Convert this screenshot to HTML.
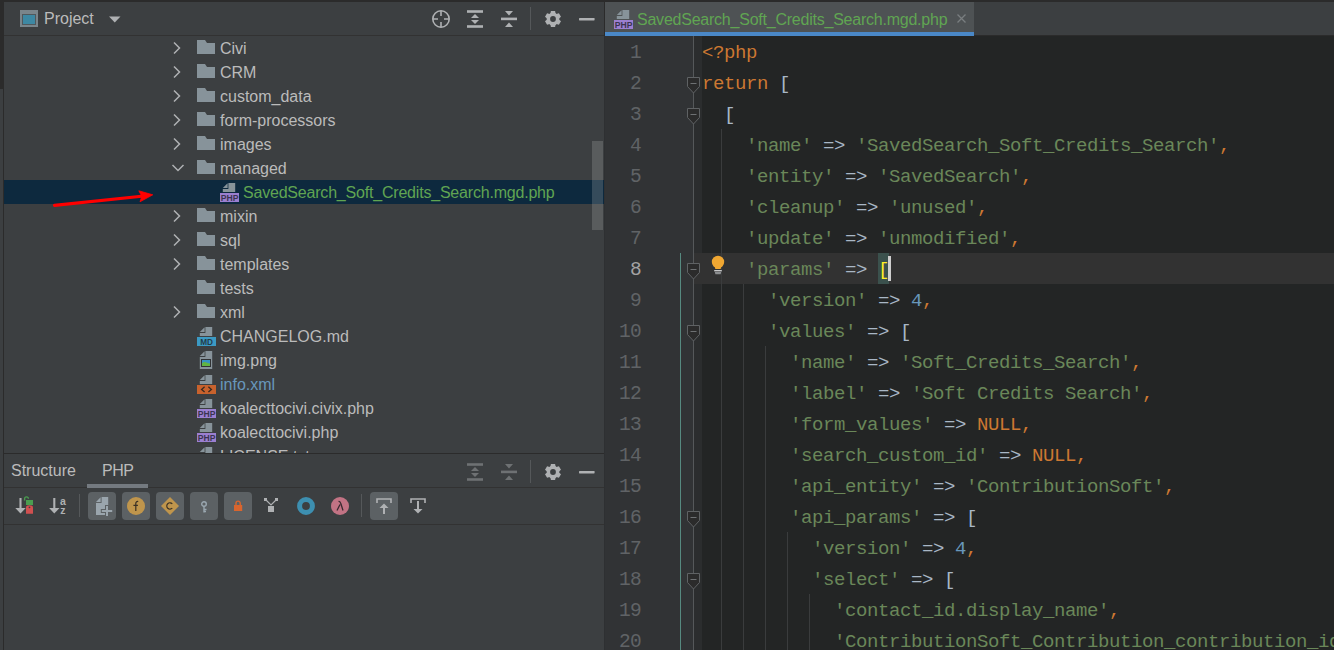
<!DOCTYPE html>
<html><head><meta charset="utf-8"><style>
*{margin:0;padding:0;box-sizing:border-box}
html,body{width:1334px;height:650px;overflow:hidden;background:#3c3f41}
body{position:relative;font-family:"Liberation Sans",sans-serif;}
.a{position:absolute}
.t{position:absolute;font-size:16px;color:#bbbbbb;white-space:pre;line-height:24px;height:24px}
.code{position:absolute;font-family:"Liberation Mono",monospace;font-size:19px;letter-spacing:-0.4px;white-space:pre;line-height:31px;height:31px;color:#a9b7c6}
.k{color:#cc7832}.s{color:#6a8759}.n{color:#6897bb}
.ln{position:absolute;font-family:"Liberation Mono",monospace;font-size:19.5px;letter-spacing:-0.7px;line-height:31px;height:31px;color:#606366;text-align:right;width:60px;left:581px}
svg{position:absolute;overflow:visible}
</style></head>
<body>
<div class="a" style="left:0;top:0;width:1334px;height:2px;background:#2b2b2b"></div>
<div class="a" style="left:0;top:2px;width:3px;height:87px;background:#2b2b2b"></div>
<div class="a" style="left:3px;top:2px;width:1px;height:648px;background:#2b2b2b"></div>
<div class="a" style="left:4px;top:35px;width:600px;height:1px;background:#323232"></div>
<div class="a" style="left:20px;top:10px;width:18px;height:17px;background:#7a858b"></div>
<div class="a" style="left:22px;top:14px;width:14px;height:11px;background:#50585c"></div>
<div class="a" style="left:23px;top:15px;width:12px;height:9px;background:#3d88a3"></div>
<div class="t" style="left:44px;top:7px">Project</div>
<svg style="left:109px;top:16px" width="12" height="8"><path d="M0 0.5H11.5L5.75 6.5Z" fill="#afb1b3"/></svg>
<svg style="left:432px;top:10px" width="18" height="18"><circle cx="9" cy="9" r="8.2" fill="none" stroke="#afb1b3" stroke-width="1.6"/><path d="M9 1V6M9 12V17M1 9H6M12 9H17" stroke="#afb1b3" stroke-width="1.6"/></svg><svg style="left:467px;top:10px" width="16" height="18"><rect x="0" y="0.2" width="16" height="2.6" fill="#afb1b3"/><rect x="0" y="15.2" width="16" height="2.6" fill="#afb1b3"/><path d="M4 8H12L8 4Z M4 10H12L8 14Z" fill="#afb1b3"/></svg><svg style="left:501px;top:10px" width="16" height="18"><rect x="0" y="7.6" width="16" height="2.6" fill="#afb1b3"/><path d="M4 1H12L8 5.5Z M4 17H12L8 12.5Z" fill="#afb1b3"/></svg><div class="a" style="left:530px;top:7px;width:1px;height:23px;background:#55585a"></div><svg style="left:545px;top:11px" width="16" height="16" viewBox="-8 -8 16 16"><path d="M-2.61 -5.40 L-2.08 -8.04 L2.08 -8.04 L2.61 -5.40 L3.37 -4.96 L5.92 -5.82 L8.00 -2.22 L5.98 -0.44 L5.98 0.44 L8.00 2.22 L5.92 5.82 L3.37 4.96 L2.61 5.40 L2.08 8.04 L-2.08 8.04 L-2.61 5.40 L-3.37 4.96 L-5.92 5.82 L-8.00 2.22 L-5.98 0.44 L-5.98 -0.44 L-8.00 -2.22 L-5.92 -5.82 L-3.37 -4.96Z" fill="#afb1b3"/><circle r="6.3" fill="#afb1b3"/><circle r="2.9" fill="#3c3f41"/></svg><svg style="left:579px;top:17px" width="16" height="4"><rect x="0" y="0.9" width="15.6" height="2.5" rx="0.6" fill="#afb1b3"/></svg>
<div class="a" style="left:4px;top:180px;width:600px;height:24px;background:#0d293e"></div>
<div class="a" style="left:4px;top:36px;width:600px;height:417px;overflow:hidden"><div class="a" style="left:-4px;top:-36px;width:1334px;height:650px"><svg style="left:173px;top:42px" width="8" height="12"><path d="M1 0.5L6.5 6L1 11.5" fill="none" stroke="#afb1b3" stroke-width="1.5"/></svg><svg style="left:197px;top:40px" width="18" height="14"><path d="M0 0H8L10 3H18V14H0Z" fill="#87939a"/></svg><div class="t" style="left:220px;top:37px">Civi</div><svg style="left:173px;top:66px" width="8" height="12"><path d="M1 0.5L6.5 6L1 11.5" fill="none" stroke="#afb1b3" stroke-width="1.5"/></svg><svg style="left:197px;top:64px" width="18" height="14"><path d="M0 0H8L10 3H18V14H0Z" fill="#87939a"/></svg><div class="t" style="left:220px;top:61px">CRM</div><svg style="left:173px;top:90px" width="8" height="12"><path d="M1 0.5L6.5 6L1 11.5" fill="none" stroke="#afb1b3" stroke-width="1.5"/></svg><svg style="left:197px;top:88px" width="18" height="14"><path d="M0 0H8L10 3H18V14H0Z" fill="#87939a"/></svg><div class="t" style="left:220px;top:85px">custom_data</div><svg style="left:173px;top:114px" width="8" height="12"><path d="M1 0.5L6.5 6L1 11.5" fill="none" stroke="#afb1b3" stroke-width="1.5"/></svg><svg style="left:197px;top:112px" width="18" height="14"><path d="M0 0H8L10 3H18V14H0Z" fill="#87939a"/></svg><div class="t" style="left:220px;top:109px">form-processors</div><svg style="left:173px;top:138px" width="8" height="12"><path d="M1 0.5L6.5 6L1 11.5" fill="none" stroke="#afb1b3" stroke-width="1.5"/></svg><svg style="left:197px;top:136px" width="18" height="14"><path d="M0 0H8L10 3H18V14H0Z" fill="#87939a"/></svg><div class="t" style="left:220px;top:133px">images</div><svg style="left:172px;top:164px" width="12" height="8"><path d="M0.5 1L6 6.5L11.5 1" fill="none" stroke="#afb1b3" stroke-width="1.5"/></svg><svg style="left:197px;top:160px" width="18" height="14"><path d="M0 0H8L10 3H18V14H0Z" fill="#87939a"/></svg><div class="t" style="left:220px;top:157px">managed</div><svg style="left:220px;top:183px" width="19" height="19"><path d="M8.4 0H15.2V9H2.8V6H8.4Z" fill="#87939a"/><path d="M2.8 5L7.6 0.2V5Z" fill="#87939a"/><rect x="0" y="10" width="19" height="9" fill="#9b7fd0"/><text x="9.6" y="17.6" text-anchor="middle" font-family="Liberation Sans" font-weight="bold" font-size="8.6" fill="#3a3450">PHP</text></svg><div class="t" style="left:243px;top:181px;color:#60a552;letter-spacing:-0.2px">SavedSearch_Soft_Credits_Search.mgd.php</div><svg style="left:173px;top:210px" width="8" height="12"><path d="M1 0.5L6.5 6L1 11.5" fill="none" stroke="#afb1b3" stroke-width="1.5"/></svg><svg style="left:197px;top:208px" width="18" height="14"><path d="M0 0H8L10 3H18V14H0Z" fill="#87939a"/></svg><div class="t" style="left:220px;top:205px">mixin</div><svg style="left:173px;top:234px" width="8" height="12"><path d="M1 0.5L6.5 6L1 11.5" fill="none" stroke="#afb1b3" stroke-width="1.5"/></svg><svg style="left:197px;top:232px" width="18" height="14"><path d="M0 0H8L10 3H18V14H0Z" fill="#87939a"/></svg><div class="t" style="left:220px;top:229px">sql</div><svg style="left:173px;top:258px" width="8" height="12"><path d="M1 0.5L6.5 6L1 11.5" fill="none" stroke="#afb1b3" stroke-width="1.5"/></svg><svg style="left:197px;top:256px" width="18" height="14"><path d="M0 0H8L10 3H18V14H0Z" fill="#87939a"/></svg><div class="t" style="left:220px;top:253px">templates</div><svg style="left:197px;top:280px" width="18" height="14"><path d="M0 0H8L10 3H18V14H0Z" fill="#87939a"/></svg><div class="t" style="left:220px;top:277px">tests</div><svg style="left:173px;top:306px" width="8" height="12"><path d="M1 0.5L6.5 6L1 11.5" fill="none" stroke="#afb1b3" stroke-width="1.5"/></svg><svg style="left:197px;top:304px" width="18" height="14"><path d="M0 0H8L10 3H18V14H0Z" fill="#87939a"/></svg><div class="t" style="left:220px;top:301px">xml</div><svg style="left:197px;top:327px" width="19" height="19"><path d="M8.4 0H15.2V9H2.8V6H8.4Z" fill="#87939a"/><path d="M2.8 5L7.6 0.2V5Z" fill="#87939a"/><rect x="0" y="10" width="19" height="9" fill="#3b9ac4"/><text x="9.6" y="17.6" text-anchor="middle" font-family="Liberation Sans" font-weight="bold" font-size="8.2" fill="#233c4a">MD</text></svg><div class="t" style="left:220px;top:325px;color:#bbbbbb">CHANGELOG.md</div><svg style="left:197px;top:351px" width="19" height="19"><path d="M8.4 0H15.2V18H2.8V6H8.4Z" fill="#87939a"/><path d="M2.8 5L7.6 0.2V5Z" fill="#87939a"/><rect x="4" y="8" width="10" height="8" fill="#313335"/><rect x="5" y="9" width="8" height="6" fill="#3592c4"/><path d="M5 15V12.2Q7.5 9.8 10 11.8Q11.5 12.5 13 12.6V15Z" fill="#62b543"/></svg><div class="t" style="left:220px;top:349px;color:#bbbbbb">img.png</div><svg style="left:197px;top:375px" width="19" height="19"><path d="M8.4 0H15.2V9H2.8V6H8.4Z" fill="#87939a"/><path d="M2.8 5L7.6 0.2V5Z" fill="#87939a"/><rect x="0" y="10" width="19" height="9" fill="#c8622d"/><path d="M7.6 11.8L4.6 14.4L7.6 17M11.4 11.8L14.4 14.4L11.4 17" fill="none" stroke="#3a2a20" stroke-width="1.3"/></svg><div class="t" style="left:220px;top:373px;color:#6897bb">info.xml</div><svg style="left:197px;top:399px" width="19" height="19"><path d="M8.4 0H15.2V9H2.8V6H8.4Z" fill="#87939a"/><path d="M2.8 5L7.6 0.2V5Z" fill="#87939a"/><rect x="0" y="10" width="19" height="9" fill="#9b7fd0"/><text x="9.6" y="17.6" text-anchor="middle" font-family="Liberation Sans" font-weight="bold" font-size="8.6" fill="#3a3450">PHP</text></svg><div class="t" style="left:220px;top:397px;color:#bbbbbb">koalecttocivi.civix.php</div><svg style="left:197px;top:423px" width="19" height="19"><path d="M8.4 0H15.2V9H2.8V6H8.4Z" fill="#87939a"/><path d="M2.8 5L7.6 0.2V5Z" fill="#87939a"/><rect x="0" y="10" width="19" height="9" fill="#9b7fd0"/><text x="9.6" y="17.6" text-anchor="middle" font-family="Liberation Sans" font-weight="bold" font-size="8.6" fill="#3a3450">PHP</text></svg><div class="t" style="left:220px;top:421px;color:#bbbbbb">koalecttocivi.php</div><svg style="left:197px;top:447px" width="19" height="19"><path d="M8.4 0H15.2V9H2.8V6H8.4Z" fill="#87939a"/><path d="M2.8 5L7.6 0.2V5Z" fill="#87939a"/><rect x="0" y="10" width="19" height="9" fill="#87939a"/></svg><div class="t" style="left:220px;top:445px;color:#bbbbbb">LICENSE.txt</div></div></div>
<svg style="left:0;top:0" width="200" height="220"><path d="M54.5 205.3L144 196" stroke="#ff0000" stroke-width="3.2" stroke-linecap="round"/><path d="M152.8 194.8L138.8 190.8L141.8 196.3L140 201.8Z" fill="#ff0000" stroke="#ff0000" stroke-width="0.8" stroke-linejoin="round"/></svg>
<div class="a" style="left:592px;top:141px;width:11px;height:89px;background:rgba(188,188,188,0.234)"></div>
<div class="a" style="left:4px;top:453px;width:600px;height:1px;background:#2b2b2b"></div>
<div class="t" style="left:11px;top:459px">Structure</div>
<div class="t" style="left:102px;top:459px;letter-spacing:-0.5px">PHP</div>
<div class="a" style="left:4px;top:487px;width:600px;height:1px;background:#323232"></div>
<div class="a" style="left:87px;top:484px;width:61px;height:4px;background:#747a80"></div>
<svg style="left:467px;top:463px" width="16" height="18"><rect x="0" y="0.2" width="16" height="2.6" fill="#6e7173"/><rect x="0" y="15.2" width="16" height="2.6" fill="#6e7173"/><path d="M4 8H12L8 4Z M4 10H12L8 14Z" fill="#6e7173"/></svg><svg style="left:501px;top:463px" width="16" height="18"><rect x="0" y="7.6" width="16" height="2.6" fill="#6e7173"/><path d="M4 1H12L8 5.5Z M4 17H12L8 12.5Z" fill="#6e7173"/></svg><div class="a" style="left:530px;top:460px;width:1px;height:23px;background:#55585a"></div><svg style="left:545px;top:464px" width="16" height="16" viewBox="-8 -8 16 16"><path d="M-2.61 -5.40 L-2.08 -8.04 L2.08 -8.04 L2.61 -5.40 L3.37 -4.96 L5.92 -5.82 L8.00 -2.22 L5.98 -0.44 L5.98 0.44 L8.00 2.22 L5.92 5.82 L3.37 4.96 L2.61 5.40 L2.08 8.04 L-2.08 8.04 L-2.61 5.40 L-3.37 4.96 L-5.92 5.82 L-8.00 2.22 L-5.98 0.44 L-5.98 -0.44 L-8.00 -2.22 L-5.92 -5.82 L-3.37 -4.96Z" fill="#afb1b3"/><circle r="6.3" fill="#afb1b3"/><circle r="2.9" fill="#3c3f41"/></svg><svg style="left:579px;top:470px" width="16" height="4"><rect x="0" y="0.9" width="15.6" height="2.5" rx="0.6" fill="#afb1b3"/></svg>
<div class="a" style="left:4px;top:524px;width:600px;height:1px;background:#323232"></div>
<div class="a" style="left:604px;top:2px;width:1px;height:34px;background:#2b2b2b"></div>
<div class="a" style="left:604px;top:36px;width:1px;height:614px;background:#2e3032"></div>
<div class="a" style="left:605px;top:35px;width:729px;height:1px;background:#2b2b2b"></div>
<div class="a" style="left:605px;top:2px;width:369px;height:30px;background:#4e5254"></div>
<div class="a" style="left:605px;top:32px;width:369px;height:4px;background:#4a88c7"></div>
<svg style="left:614px;top:10px" width="19" height="19"><path d="M8.4 0H15.2V9H2.8V6H8.4Z" fill="#87939a"/><path d="M2.8 5L7.6 0.2V5Z" fill="#87939a"/><rect x="0" y="10" width="19" height="9" fill="#9b7fd0"/><text x="9.6" y="17.6" text-anchor="middle" font-family="Liberation Sans" font-weight="bold" font-size="8.6" fill="#3a3450">PHP</text></svg>
<div class="t" style="left:637px;top:8px;color:#60a552;letter-spacing:-0.23px">SavedSearch_Soft_Credits_Search.mgd.php</div>
<svg style="left:957px;top:14px" width="9" height="9"><path d="M0.5 0.5L8.5 8.5M8.5 0.5L0.5 8.5" stroke="#7a7e80" stroke-width="1.3"/></svg>
<div class="a" style="left:605px;top:36px;width:97px;height:614px;background:#313335"></div>
<div class="a" style="left:702px;top:36px;width:632px;height:614px;background:#232525"></div>
<div class="a" style="left:694px;top:36px;width:8px;height:614px;background:#2b2d2e"></div>
<div class="a" style="left:694px;top:253px;width:640px;height:31px;background:#323232"></div>
<div class="a" style="left:680px;top:253px;width:1px;height:397px;background:#568a80"></div>
<div class="a" style="left:693px;top:36px;width:1px;height:614px;background:#55585a"></div>
<div class="a" style="left:721px;top:129px;width:1px;height:521px;background:#3a3c3d"></div>
<div class="a" style="left:743px;top:284px;width:1px;height:366px;background:#3a3c3d"></div>
<div class="a" style="left:765px;top:346px;width:1px;height:304px;background:#3a3c3d"></div>
<div class="a" style="left:787px;top:532px;width:1px;height:118px;background:#3a3c3d"></div>
<div class="a" style="left:809px;top:594px;width:1px;height:56px;background:#3a3c3d"></div>
<svg style="left:687px;top:77px" width="14" height="17"><path d="M0.5 0.5H12.5V9.5L6.5 16L0.5 9.5Z" fill="#2b2b2b" stroke="#5f6264" stroke-width="1"/><path d="M3.5 6.5H9.5" stroke="#6e7173" stroke-width="1"/></svg>
<svg style="left:687px;top:108px" width="14" height="17"><path d="M0.5 0.5H12.5V9.5L6.5 16L0.5 9.5Z" fill="#2b2b2b" stroke="#5f6264" stroke-width="1"/><path d="M3.5 6.5H9.5" stroke="#6e7173" stroke-width="1"/></svg>
<svg style="left:687px;top:263px" width="14" height="17"><path d="M0.5 0.5H12.5V9.5L6.5 16L0.5 9.5Z" fill="#2b2b2b" stroke="#5f6264" stroke-width="1"/><path d="M3.5 6.5H9.5" stroke="#6e7173" stroke-width="1"/></svg>
<svg style="left:687px;top:325px" width="14" height="17"><path d="M0.5 0.5H12.5V9.5L6.5 16L0.5 9.5Z" fill="#2b2b2b" stroke="#5f6264" stroke-width="1"/><path d="M3.5 6.5H9.5" stroke="#6e7173" stroke-width="1"/></svg>
<svg style="left:687px;top:511px" width="14" height="17"><path d="M0.5 0.5H12.5V9.5L6.5 16L0.5 9.5Z" fill="#2b2b2b" stroke="#5f6264" stroke-width="1"/><path d="M3.5 6.5H9.5" stroke="#6e7173" stroke-width="1"/></svg>
<svg style="left:687px;top:573px" width="14" height="17"><path d="M0.5 0.5H12.5V9.5L6.5 16L0.5 9.5Z" fill="#2b2b2b" stroke="#5f6264" stroke-width="1"/><path d="M3.5 6.5H9.5" stroke="#6e7173" stroke-width="1"/></svg>
<svg style="left:711px;top:255px" width="14" height="20"><circle cx="7" cy="7" r="6.2" fill="#f0a732"/><path d="M3 10.5Q4.2 12 4.3 14H9.7Q9.8 12 11 10.5Z" fill="#f0a732"/><rect x="3.2" y="15" width="7.6" height="1.4" fill="#c8c9ca"/><path d="M3.8 17H10.2L9.6 19.2H4.4Z" fill="#8c8e90"/></svg>
<div class="code" style="left:702px;top:38px"><span class="k">&lt;?php</span></div>
<div class="ln" style="top:38px;color:#606366">1</div>
<div class="code" style="left:702px;top:69px"><span class="k">return</span> [</div>
<div class="ln" style="top:69px;color:#606366">2</div>
<div class="code" style="left:702px;top:100px">  [</div>
<div class="ln" style="top:100px;color:#606366">3</div>
<div class="code" style="left:702px;top:131px">    <span class="s">&#x27;name&#x27;</span> =&gt; <span class="s">&#x27;SavedSearch_Soft_Credits_Search&#x27;</span><span class="k">,</span></div>
<div class="ln" style="top:131px;color:#606366">4</div>
<div class="code" style="left:702px;top:162px">    <span class="s">&#x27;entity&#x27;</span> =&gt; <span class="s">&#x27;SavedSearch&#x27;</span><span class="k">,</span></div>
<div class="ln" style="top:162px;color:#606366">5</div>
<div class="code" style="left:702px;top:193px">    <span class="s">&#x27;cleanup&#x27;</span> =&gt; <span class="s">&#x27;unused&#x27;</span><span class="k">,</span></div>
<div class="ln" style="top:193px;color:#606366">6</div>
<div class="code" style="left:702px;top:224px">    <span class="s">&#x27;update&#x27;</span> =&gt; <span class="s">&#x27;unmodified&#x27;</span><span class="k">,</span></div>
<div class="ln" style="top:224px;color:#606366">7</div>
<div class="code" style="left:702px;top:255px">    <span class="s">&#x27;params&#x27;</span> =&gt; </div>
<div class="ln" style="top:255px;color:#a4a3a3">8</div>
<div class="code" style="left:702px;top:286px">      <span class="s">&#x27;version&#x27;</span> =&gt; <span class="n">4</span><span class="k">,</span></div>
<div class="ln" style="top:286px;color:#606366">9</div>
<div class="code" style="left:702px;top:317px">      <span class="s">&#x27;values&#x27;</span> =&gt; [</div>
<div class="ln" style="top:317px;color:#606366">10</div>
<div class="code" style="left:702px;top:348px">        <span class="s">&#x27;name&#x27;</span> =&gt; <span class="s">&#x27;Soft_Credits_Search&#x27;</span><span class="k">,</span></div>
<div class="ln" style="top:348px;color:#606366">11</div>
<div class="code" style="left:702px;top:379px">        <span class="s">&#x27;label&#x27;</span> =&gt; <span class="s">&#x27;Soft Credits Search&#x27;</span><span class="k">,</span></div>
<div class="ln" style="top:379px;color:#606366">12</div>
<div class="code" style="left:702px;top:410px">        <span class="s">&#x27;form_values&#x27;</span> =&gt; <span class="k">NULL,</span></div>
<div class="ln" style="top:410px;color:#606366">13</div>
<div class="code" style="left:702px;top:441px">        <span class="s">&#x27;search_custom_id&#x27;</span> =&gt; <span class="k">NULL,</span></div>
<div class="ln" style="top:441px;color:#606366">14</div>
<div class="code" style="left:702px;top:472px">        <span class="s">&#x27;api_entity&#x27;</span> =&gt; <span class="s">&#x27;ContributionSoft&#x27;</span><span class="k">,</span></div>
<div class="ln" style="top:472px;color:#606366">15</div>
<div class="code" style="left:702px;top:503px">        <span class="s">&#x27;api_params&#x27;</span> =&gt; [</div>
<div class="ln" style="top:503px;color:#606366">16</div>
<div class="code" style="left:702px;top:534px">          <span class="s">&#x27;version&#x27;</span> =&gt; <span class="n">4</span><span class="k">,</span></div>
<div class="ln" style="top:534px;color:#606366">17</div>
<div class="code" style="left:702px;top:565px">          <span class="s">&#x27;select&#x27;</span> =&gt; [</div>
<div class="ln" style="top:565px;color:#606366">18</div>
<div class="code" style="left:702px;top:596px">            <span class="s">&#x27;contact_id.display_name&#x27;</span><span class="k">,</span></div>
<div class="ln" style="top:596px;color:#606366">19</div>
<div class="code" style="left:702px;top:627px">            <span class="s">&#x27;ContributionSoft_Contribution_contribution_id&#x27;</span></div>
<div class="ln" style="top:627px;color:#606366">20</div>
<div class="a" style="left:878px;top:253px;width:11px;height:31px;background:#3b514d"></div>
<div class="code" style="left:878px;top:255px;color:#ffef28">[</div>
<div class="a" style="left:888px;top:256px;width:3px;height:25px;background:#cfcfcf"></div>
<svg style="left:15px;top:496px" width="20" height="19"><path d="M5.5 2V13" stroke="#afb1b3" stroke-width="2.1"/><path d="M0.3 12H10.7L5.5 17.5Z" fill="#afb1b3"/><rect x="11" y="4" width="7" height="5" fill="#4a9e50"/><path d="M9.6 4.5V2.7A1.9 1.9 0 0 1 13.4 2.7" fill="none" stroke="#4a9e50" stroke-width="1.3"/><path d="M11 17.8V11.5Q11 9.2 14.5 9.2Q18 9.2 18 11.5V17.8Z" fill="#d05050"/><circle cx="14.5" cy="11.3" r="0.9" fill="#3c3f41"/></svg><svg style="left:49px;top:496px" width="18" height="19"><path d="M5.3 2V13" stroke="#afb1b3" stroke-width="2.1"/><path d="M0.1 12H10.5L5.3 17.5Z" fill="#afb1b3"/></svg><svg style="left:59px;top:496px" width="9" height="19"><text x="3.8" y="8.7" text-anchor="middle" font-family="Liberation Sans" font-weight="bold" font-size="10.5" fill="#afb1b3">a</text><text x="3.8" y="17.7" text-anchor="middle" font-family="Liberation Sans" font-weight="bold" font-size="10.5" fill="#afb1b3">z</text></svg><div class="a" style="left:79px;top:494px;width:1px;height:23px;background:#55585a"></div><div class="a" style="left:88px;top:492px;width:28px;height:28px;background:#5c6164;border-radius:4px"></div><div class="a" style="left:122px;top:492px;width:28px;height:28px;background:#5c6164;border-radius:4px"></div><div class="a" style="left:156px;top:492px;width:28px;height:28px;background:#5c6164;border-radius:4px"></div><div class="a" style="left:190px;top:492px;width:28px;height:28px;background:#5c6164;border-radius:4px"></div><div class="a" style="left:224px;top:492px;width:28px;height:28px;background:#5c6164;border-radius:4px"></div><svg style="left:96px;top:497px" width="17" height="19"><path d="M5.6 0H12.2V18H0V6H5.6Z" fill="#9aa5ad"/><path d="M0 5L4.6 0.3V5Z" fill="#9aa5ad"/><path d="M11 8V20M4.8 14H17.2" stroke="#5c6164" stroke-width="4"/><path d="M11 9V19M5.8 14H16.2" stroke="#9aa5ad" stroke-width="2"/></svg><svg style="left:127px;top:497px" width="18" height="18"><circle cx="9" cy="9" r="9" fill="#bf954c"/><path d="M11.2 4.6Q9.2 3.9 8.8 6.2V14M6.4 8.3H10.9" fill="none" stroke="#3a3024" stroke-width="1.2"/></svg><svg style="left:161px;top:497px" width="18" height="18"><path d="M9 0L18 9L9 18L0 9Z" fill="#bf954c"/><path d="M11.3 6.8A3.2 3.2 0 1 0 11.3 11.2" fill="none" stroke="#3a3024" stroke-width="1.15"/></svg><svg style="left:201px;top:501px" width="8" height="12"><circle cx="3" cy="3" r="2.3" fill="none" stroke="#9aa7b0" stroke-width="1.4"/><path d="M3 5V11.5M3 8.5H5.5M3 10.5H5" stroke="#9aa7b0" stroke-width="1.4"/></svg><svg style="left:234px;top:500px" width="9" height="11"><rect x="0" y="5" width="8.2" height="6" fill="#d9652e"/><path d="M2 5.5V3.2A2.1 2.1 0 0 1 6.2 3.2V5.5" fill="none" stroke="#d9652e" stroke-width="1.4"/></svg><svg style="left:264px;top:498px" width="15" height="15"><rect x="0" y="0" width="3" height="3" fill="#afb1b3"/><rect x="11" y="0" width="3" height="3" fill="#afb1b3"/><path d="M1.5 1.5L7 7L12.5 1.5" fill="none" stroke="#afb1b3" stroke-width="1.2"/><rect x="4" y="8" width="6" height="6" fill="#afb1b3"/></svg><svg style="left:297px;top:497px" width="18" height="18"><circle cx="9" cy="9" r="6.4" fill="none" stroke="#3d8fb0" stroke-width="5"/></svg><svg style="left:331px;top:497px" width="18" height="18"><circle cx="9" cy="9" r="9" fill="#c27384"/><path d="M6 13.5L9 7.5M7.5 4.5Q9 4 10 7L12 13.5" fill="none" stroke="#3a2a30" stroke-width="1.3"/></svg><div class="a" style="left:361px;top:494px;width:1px;height:23px;background:#55585a"></div><div class="a" style="left:370px;top:492px;width:28px;height:28px;background:#5c6164;border-radius:4px"></div><svg style="left:376px;top:498px" width="16" height="17"><path d="M1 5V1H15V5" fill="none" stroke="#afb1b3" stroke-width="1.6"/><path d="M8 7V16" stroke="#afb1b3" stroke-width="2"/><path d="M3.5 10H12.5L8 5.5Z" fill="#afb1b3"/></svg><svg style="left:410px;top:498px" width="16" height="17"><path d="M1 5V1H15V5" fill="none" stroke="#afb1b3" stroke-width="1.6"/><path d="M8 3V12" stroke="#afb1b3" stroke-width="2"/><path d="M3.5 11H12.5L8 15.5Z" fill="#afb1b3"/></svg>
</body></html>
